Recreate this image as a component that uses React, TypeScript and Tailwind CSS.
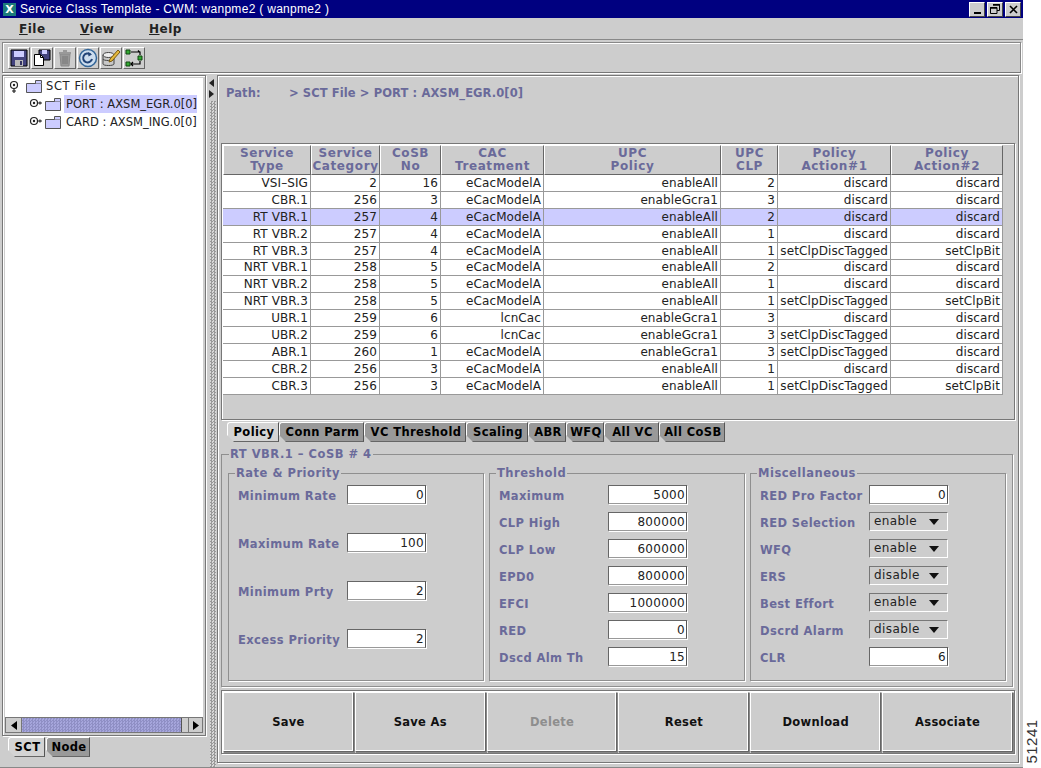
const FONT = "font-['DejaVu_Sans',sans-serif]";

const COLUMNS = [
  { top: 'Service', bottom: 'Type', width: 'w-[88px]' },
  { top: 'Service', bottom: 'Category', width: 'w-[69px]' },
  { top: 'CoSB', bottom: 'No', width: 'w-[61px]' },
  { top: 'CAC', bottom: 'Treatment', width: 'w-[103px]' },
  { top: 'UPC', bottom: 'Policy', width: 'w-[177px]' },
  { top: 'UPC', bottom: 'CLP', width: 'w-[57px]' },
  { top: 'Policy', bottom: 'Action#1', width: 'w-[113px]' },
  { top: 'Policy', bottom: 'Action#2', width: 'w-[112px]' },
];

const ROWS = [
  ['VSI–SIG', '2', '16', 'eCacModelA', 'enableAll', '2', 'discard', 'discard'],
  ['CBR.1', '256', '3', 'eCacModelA', 'enableGcra1', '3', 'discard', 'discard'],
  ['RT VBR.1', '257', '4', 'eCacModelA', 'enableAll', '2', 'discard', 'discard'],
  ['RT VBR.2', '257', '4', 'eCacModelA', 'enableAll', '1', 'discard', 'discard'],
  ['RT VBR.3', '257', '4', 'eCacModelA', 'enableAll', '1', 'setClpDiscTagged', 'setClpBit'],
  ['NRT VBR.1', '258', '5', 'eCacModelA', 'enableAll', '2', 'discard', 'discard'],
  ['NRT VBR.2', '258', '5', 'eCacModelA', 'enableAll', '1', 'discard', 'discard'],
  ['NRT VBR.3', '258', '5', 'eCacModelA', 'enableAll', '1', 'setClpDiscTagged', 'setClpBit'],
  ['UBR.1', '259', '6', 'lcnCac', 'enableGcra1', '3', 'discard', 'discard'],
  ['UBR.2', '259', '6', 'lcnCac', 'enableGcra1', '3', 'setClpDiscTagged', 'discard'],
  ['ABR.1', '260', '1', 'eCacModelA', 'enableGcra1', '3', 'setClpDiscTagged', 'discard'],
  ['CBR.2', '256', '3', 'eCacModelA', 'enableAll', '1', 'discard', 'discard'],
  ['CBR.3', '256', '3', 'eCacModelA', 'enableAll', '1', 'setClpDiscTagged', 'setClpBit'],
];

const TABS = [
  { label: 'Policy', width: 'w-[52px]' },
  { label: 'Conn Parm', width: 'w-[85px]' },
  { label: 'VC Threshold', width: 'w-[102px]' },
  { label: 'Scaling', width: 'w-[62px]' },
  { label: 'ABR', width: 'w-[38px]' },
  { label: 'WFQ', width: 'w-[38px]' },
  { label: 'All VC', width: 'w-[55px]' },
  { label: 'All CoSB', width: 'w-[66px]' },
];

const BUTTONS = ['Save', 'Save As', 'Delete', 'Reset', 'Download', 'Associate'];

type Field = { label: string; value: string; select?: boolean };

const RATE: Field[] = [
  { label: 'Minimum Rate', value: '0' },
  { label: 'Maximum Rate', value: '100' },
  { label: 'Minimum Prty', value: '2' },
  { label: 'Excess Priority', value: '2' },
];

const THRESHOLD: Field[] = [
  { label: 'Maximum', value: '5000' },
  { label: 'CLP High', value: '800000' },
  { label: 'CLP Low', value: '600000' },
  { label: 'EPD0', value: '800000' },
  { label: 'EFCI', value: '1000000' },
  { label: 'RED', value: '0' },
  { label: 'Dscd Alm Th', value: '15' },
];

const MISC: Field[] = [
  { label: 'RED Pro Factor', value: '0' },
  { label: 'RED Selection', value: 'enable', select: true },
  { label: 'WFQ', value: 'enable', select: true },
  { label: 'ERS', value: 'disable', select: true },
  { label: 'Best Effort', value: 'enable', select: true },
  { label: 'Dscrd Alarm', value: 'disable', select: true },
  { label: 'CLR', value: '6' },
];

function FolderIcon() {
  return (
    <svg width="16" height="14" viewBox="0 0 16 14" className="shrink-0">
      <path d="M.5 4.5h15v9H.5z" fill="#ccccff" stroke="#555" />
      <path d="M9.5 4.5V1.5h6v3" fill="#ccccff" stroke="#555" />
    </svg>
  );
}

function TreeHandle({ open }: { open?: boolean }) {
  return (
    <svg width="13" height="13" viewBox="0 0 13 13" className="shrink-0">
      <circle cx="5" cy="5" r="3.5" fill="#fff" stroke="#222" strokeWidth="1.2" />
      <circle cx="5" cy="5" r="1.2" fill="#222" />
      {open ? (
        <path d="M5 9v4M3 11h4" stroke="#222" strokeWidth="1.2" />
      ) : (
        <path d="M9 5h4M11 3.5v3" stroke="#222" strokeWidth="1.2" />
      )}
    </svg>
  );
}

function ToolIcon({ index }: { index: number }) {
  if (index === 0) {
    return (
      <svg width="18" height="18" viewBox="0 0 18 18">
        <path d="M1 1h16v16H1z" fill="#44447f" stroke="#000" />
        <path d="M4 2h10v6H4z" fill="#ccccff" />
        <path d="M5 11h8v6H5z" fill="#bbb" />
        <path d="M10 12h2v4h-2z" fill="#33335f" />
      </svg>
    );
  }
  if (index === 1) {
    return (
      <svg width="18" height="18" viewBox="0 0 18 18">
        <path d="M6 1h11v10H6z" fill="#44447f" stroke="#000" />
        <path d="M9 1h5v4H9z" fill="#ccccff" />
        <path d="M1.500 5.500h6l3 3v8h-9z" fill="#fff" stroke="#000" />
        <path d="M7.500 5.500v3h3" fill="none" stroke="#000" />
      </svg>
    );
  }
  if (index === 2) {
    return (
      <svg width="18" height="18" viewBox="0 0 18 18">
        <path d="M4 5h10l-1 12H5z" fill="#999" stroke="#888" />
        <path d="M3 3h12v2H3zM7 1h4v2H7z" fill="#999" />
        <path d="M7 7v8M9 7v8M11 7v8" stroke="#777" />
      </svg>
    );
  }
  if (index === 3) {
    return (
      <svg width="20" height="20" viewBox="0 0 20 20">
        <circle cx="10" cy="10" r="8.500" fill="#ccddee" stroke="#336699" strokeWidth="1.500" />
        <path d="M14 11a4.500 4.500 0 1 1-1.500-4.500" fill="none" stroke="#224477" strokeWidth="2" />
        <path d="M10 4l4 2.500-3.500 2z" fill="#224477" />
      </svg>
    );
  }
  if (index === 4) {
    return (
      <svg width="20" height="20" viewBox="0 0 20 20">
        <path d="M2 7v9c0 2 11 2 11 0V7z" fill="#c8c8c8" stroke="#444" />
        <ellipse cx="7.500" cy="7" rx="5.500" ry="2.500" fill="#eee" stroke="#444" />
        <path d="M2 11c0 2 11 2 11 0" fill="none" stroke="#444" />
        <path d="M9 11l8-9 2 2-8 9-3 1z" fill="#e5b93c" stroke="#7a5a10" />
      </svg>
    );
  }
  return (
    <svg width="18" height="18" viewBox="0 0 18 18">
      <path d="M1 1h4v4H1zM1 13h4v4H1zM13 7h4v4h-4z" fill="#33aa33" stroke="#114411" />
      <path d="M6 3h9v3M13 15H6M8 13l-2 2 2 2M13 1.500l2 2" fill="none" stroke="#000" strokeWidth="1.200" />
      <path d="M15 12v3h-2" fill="none" stroke="#000" strokeWidth="1.200" />
    </svg>
  );
}

function Label({ children }: { children: string }) {
  return (
    <span className="text-[11.5px] font-bold tracking-[0.4px] text-[#6a6a9a] whitespace-nowrap">{children}</span>
  );
}

function FieldControl({ field }: { field: Field }) {
  if (field.select) {
    return (
      <div className="flex h-[19px] w-[79px] items-center justify-between border border-t-[#777] border-l-[#777] border-r-white border-b-white bg-[#cdcdcd] pl-1 pr-2 text-[12px] tracking-[0.4px] text-[#222]">
        <span className="-mt-[1px]">{field.value}</span>
        <svg width="10" height="6" viewBox="0 0 10 6">
          <path d="M0 0h10L5 6z" fill="#111" />
        </svg>
      </div>
    );
  }
  return (
    <div className="flex h-[19px] w-[79px] items-center justify-end border border-t-[#666] border-l-[#666] border-r-[#555] border-b-[#999] bg-white pr-[1px] text-[12px] leading-none tracking-[0.3px] text-[#222] shadow-[1px_1px_0_#fff]">
      {field.value}
    </div>
  );
}

function Group({ title, fields, className, rowClass }: { title: string; fields: Field[]; className: string; rowClass: string }) {
  return (
    <fieldset className={`h-[215px] border border-[#8f8f8f] pl-[9px] shadow-[1px_1px_0_#fff] ${className}`}>
      <legend className="ml-[-3px] px-[1px] text-[11.5px] leading-[14px] font-bold tracking-[0.5px] text-[#6a6a9a]">{title}</legend>
      <div className={`flex flex-col pt-[5px] ${rowClass}`}>
        {fields.map((field) => (
          <div key={field.label} className="flex h-[19px] items-center">
            <div className="w-[109px]">
              <Label>{field.label}</Label>
            </div>
            <FieldControl field={field} />
          </div>
        ))}
      </div>
    </fieldset>
  );
}

function Tab({ label, active, className }: { label: string; active?: boolean; className: string }) {
  return (
    <div
      className={`flex h-[20px] items-center justify-center rounded-tl-[3px] border-t border-l border-t-white border-l-white border-r border-r-[#555] border-b border-b-[#666] pt-[1px] pl-[2px] text-[11.5px] font-bold tracking-[0.4px] text-black [clip-path:polygon(0_0,100%_0,100%_100%,7px_100%,0_13px)] ${
        active ? 'bg-[#d4d4d4]' : 'bg-[#999999]'
      } ${className}`}
    >
      {label}
    </div>
  );
}

export default function App() {
  return (
    <div className={`relative h-[768px] w-[1041px] overflow-hidden bg-white ${FONT}`}>
      <div className="flex h-[768px] w-[1023px] flex-col bg-[#cdcdcd] border-b border-[#888]">
        {/* title bar */}
        <div className="flex h-[18px] shrink-0 items-center bg-[#000080] pl-[3px] pr-[1px]">
          <div className="flex h-[13px] w-[13px] items-center justify-center bg-[#1c7a7a] text-[11px] leading-none font-bold text-white">X</div>
          <span className="ml-[4px] font-['Liberation_Sans',sans-serif] text-[12px] tracking-[0.3px] text-white">
            Service Class Template - CWM: wanpme2 ( wanpme2 )
          </span>
          <div className="ml-auto flex gap-[2px] pr-[1px]">
            <div className="flex h-[15px] w-[16px] items-end justify-center border border-t-white border-l-white border-r-[#444] border-b-[#444] bg-[#cdcdcd] pb-[2px]">
              <div className="h-[2px] w-[7px] bg-black" />
            </div>
            <div className="flex h-[15px] w-[16px] items-center justify-center border border-t-white border-l-white border-r-[#444] border-b-[#444] bg-[#cdcdcd]">
              <svg width="10" height="10" viewBox="0 0 10 10">
                <path d="M3 .5h6.500v6H7M.5 3.500h6.500v6H.5z" fill="none" stroke="#000" />
                <path d="M3 1h7M0 4h7" stroke="#000" strokeWidth="1.500" />
              </svg>
            </div>
            <div className="flex h-[15px] w-[16px] items-center justify-center border border-t-white border-l-white border-r-[#444] border-b-[#444] bg-[#cdcdcd]">
              <svg width="9" height="9" viewBox="0 0 9 9">
                <path d="M1 1l7 7M8 1L1 8" stroke="#000" strokeWidth="1.600" />
              </svg>
            </div>
          </div>
        </div>

        {/* menu */}
        <div className="flex h-[22px] shrink-0 items-center border-b border-[#888] pl-[19px] text-[12px] font-bold tracking-[0.5px] text-[#222]">
          <span className="w-[61px]"><span className="underline">F</span>ile</span>
          <span className="w-[69px]"><span className="underline">V</span>iew</span>
          <span><span className="underline">H</span>elp</span>
        </div>

        {/* toolbar */}
        <div className="mx-[2px] mt-[2px] flex h-[31px] shrink-0 items-center gap-[1px] border border-t-[#888] border-l-[#888] border-r-[#888] border-b-[#777] pl-[5px] shadow-[inset_1px_1px_0_#fff,1px_1px_0_#fff]">
          {[0, 1, 2, 3, 4, 5].map((i) => (
            <div key={i} className="flex h-[22px] w-[22px] items-center justify-center border border-t-white border-l-white border-r-[#666] border-b-[#666]">
              <ToolIcon index={i} />
            </div>
          ))}
        </div>

        {/* main area */}
        <div className="mt-[2px] flex min-h-0 flex-1 pl-[2px]">
          {/* left panel */}
          <div className="flex w-[204px] shrink-0 flex-col">
            <div className="flex h-[661px] flex-col border border-[#777] py-[2px] pl-[2px] pr-[2px] shadow-[inset_1px_1px_0_#fff,1px_1px_0_#fff]">
              <div className="flex min-h-0 flex-1 flex-col overflow-hidden bg-white pl-[4px] text-[11.5px] leading-[18px] text-[#222]">
                <div className="-mt-[1px] flex h-[18px] items-center gap-[4px]">
                  <TreeHandle open />
                  <FolderIcon />
                  <span className="tracking-[0.6px]">SCT File</span>
                </div>
                <div className="flex h-[18px] items-center gap-[3px] pl-[20px]">
                  <TreeHandle />
                  <FolderIcon />
                  <span className="bg-[#ccccff] pl-[2px] whitespace-nowrap">PORT : AXSM_EGR.0[0]</span>
                </div>
                <div className="flex h-[18px] items-center gap-[3px] pl-[20px]">
                  <TreeHandle />
                  <FolderIcon />
                  <span className="pl-[2px] whitespace-nowrap">CARD : AXSM_ING.0[0]</span>
                </div>
              </div>
              {/* horizontal scrollbar */}
              <div className="flex h-[16px] shrink-0 items-center border border-[#777] bg-[#cdcdcd]">
                <div className="flex h-full w-[16px] items-center justify-center border-r border-[#777]">
                  <svg width="6" height="9" viewBox="0 0 6 9"><path d="M6 0v9L0 4.500z" fill="#000" /></svg>
                </div>
                <div className="h-full flex-1 border-r border-[#555] bg-[#9999cc] bg-[repeating-conic-gradient(#8f8fc4_0_25%,#a6a6dc_0_50%)] bg-[length:3px_3px]" />
                <div className="h-full w-[6px]" />
                <div className="flex h-full w-[14px] items-center justify-center border-l border-[#777]">
                  <svg width="6" height="9" viewBox="0 0 6 9"><path d="M0 0v9l6-4.500z" fill="#000" /></svg>
                </div>
              </div>
            </div>
            <div className="mt-[1px] flex pl-[6px]">
              <Tab label="SCT" active className="w-[37px]" />
              <Tab label="Node" className="ml-[1px] w-[44px]" />
            </div>
          </div>

          {/* splitter */}
          <div className="flex w-[11px] shrink-0 flex-col items-center pt-[4px]">
            <svg width="6" height="20" viewBox="0 0 6 20" className="mb-[2px]">
              <path d="M5 0v8L0 4zM0 11v8l5-4z" fill="#222" />
            </svg>
            <div className="ml-[2px] w-[6px] flex-1 bg-[repeating-conic-gradient(#999_0_25%,#d8d8d8_0_50%)] bg-[length:3px_3px]" />
          </div>

          {/* right panel */}
          <div className="flex h-[688px] w-[802px] shrink-0 flex-col border border-[#777] pl-[3px] pr-[2px] shadow-[inset_1px_1px_0_#fff,1px_1px_0_#fff]">
            <div className="flex h-[67px] shrink-0 items-start pl-[5px] pt-[9px] text-[11.5px] font-bold tracking-[0.1px] text-[#6a6a9a]">
              <span className="w-[63px]">Path:</span>
              <span>&gt; SCT File &gt; PORT : AXSM_EGR.0[0]</span>
            </div>

            {/* table */}
            <div className="h-[277px] w-[794px] shrink-0 border border-[#777] pl-[1px] pt-[1px] shadow-[inset_1px_1px_0_#fff,1px_1px_0_#fff]">
              <div className="flex h-[30px] w-[780px]">
                {COLUMNS.map((col) => (
                  <div
                    key={col.top + col.bottom}
                    className={`flex flex-col items-center justify-center border border-t-white border-l-white border-r-[#666] border-b-[#666] pb-[1px] text-[12px] leading-[13px] font-bold tracking-[0.6px] text-[#6a6a9a] ${col.width}`}
                  >
                    <span>{col.top}</span>
                    <span>{col.bottom}</span>
                  </div>
                ))}
              </div>
              <div className="w-[780px] bg-white">
                {ROWS.map((row, r) => (
                  <div key={r} className={`flex h-[16.92px] border-b border-[#999] ${r === 2 ? 'bg-[#ccccff]' : ''}`}>
                    {row.map((cell, c) => (
                      <div
                        key={c}
                        className={`flex items-center justify-end border-r border-[#999] pr-[2px] text-[12px] leading-none tracking-[0.1px] whitespace-nowrap text-[#222] ${COLUMNS[c].width}`}
                      >
                        {cell}
                      </div>
                    ))}
                  </div>
                ))}
              </div>
            </div>

            {/* tabs */}
            <div className="mt-[2px] flex shrink-0 pl-[6px]">
              {TABS.map((tab, i) => (
                <Tab key={tab.label} label={tab.label} active={i === 0} className={tab.width} />
              ))}
            </div>

            {/* policy form */}
            <fieldset className="mt-[5px] h-[240px] w-[792px] shrink-0 border border-[#8f8f8f] pl-[6px] shadow-[1px_1px_0_#fff]">
              <legend className="ml-[1px] px-[1px] text-[11.5px] leading-[14px] font-bold tracking-[0.5px] text-[#6a6a9a]">RT VBR.1 – CoSB # 4</legend>
              <div className="flex gap-[5px] pt-[5px]">
                <Group title="Rate & Priority" fields={RATE} className="w-[256px]" rowClass="gap-[29px]" />
                <Group title="Threshold" fields={THRESHOLD} className="w-[256px]" rowClass="gap-[8px]" />
                <Group title="Miscellaneous" fields={MISC} className="w-[256px]" rowClass="gap-[8px]" />
              </div>
            </fieldset>

            {/* buttons */}
            <div className="mt-[3px] flex h-[64px] w-[794px] shrink-0 gap-[1px] border border-[#777] p-[1px] shadow-[inset_1px_1px_0_#fff,1px_1px_0_#fff]">
              {BUTTONS.map((label) => (
                <div
                  key={label}
                  className={`flex flex-1 items-center justify-center border border-t-white border-l-white border-r-[#666] border-b-[#666] pt-[1px] shadow-[inset_-1px_-1px_0_#fff,1px_1px_0_#888] text-[11.5px] font-bold tracking-[0.3px] ${
                    label === 'Delete' ? 'text-[#8e8e8e]' : 'text-[#111]'
                  }`}
                >
                  {label}
                </div>
              ))}
            </div>
          </div>
        </div>
      </div>

      {/* figure number */}
      <span className="absolute left-[1009px] top-[734px] origin-center -rotate-90 font-['Liberation_Sans',sans-serif] text-[15px] leading-none tracking-[0.5px] text-[#333]">
        51241
      </span>
    </div>
  );
}
